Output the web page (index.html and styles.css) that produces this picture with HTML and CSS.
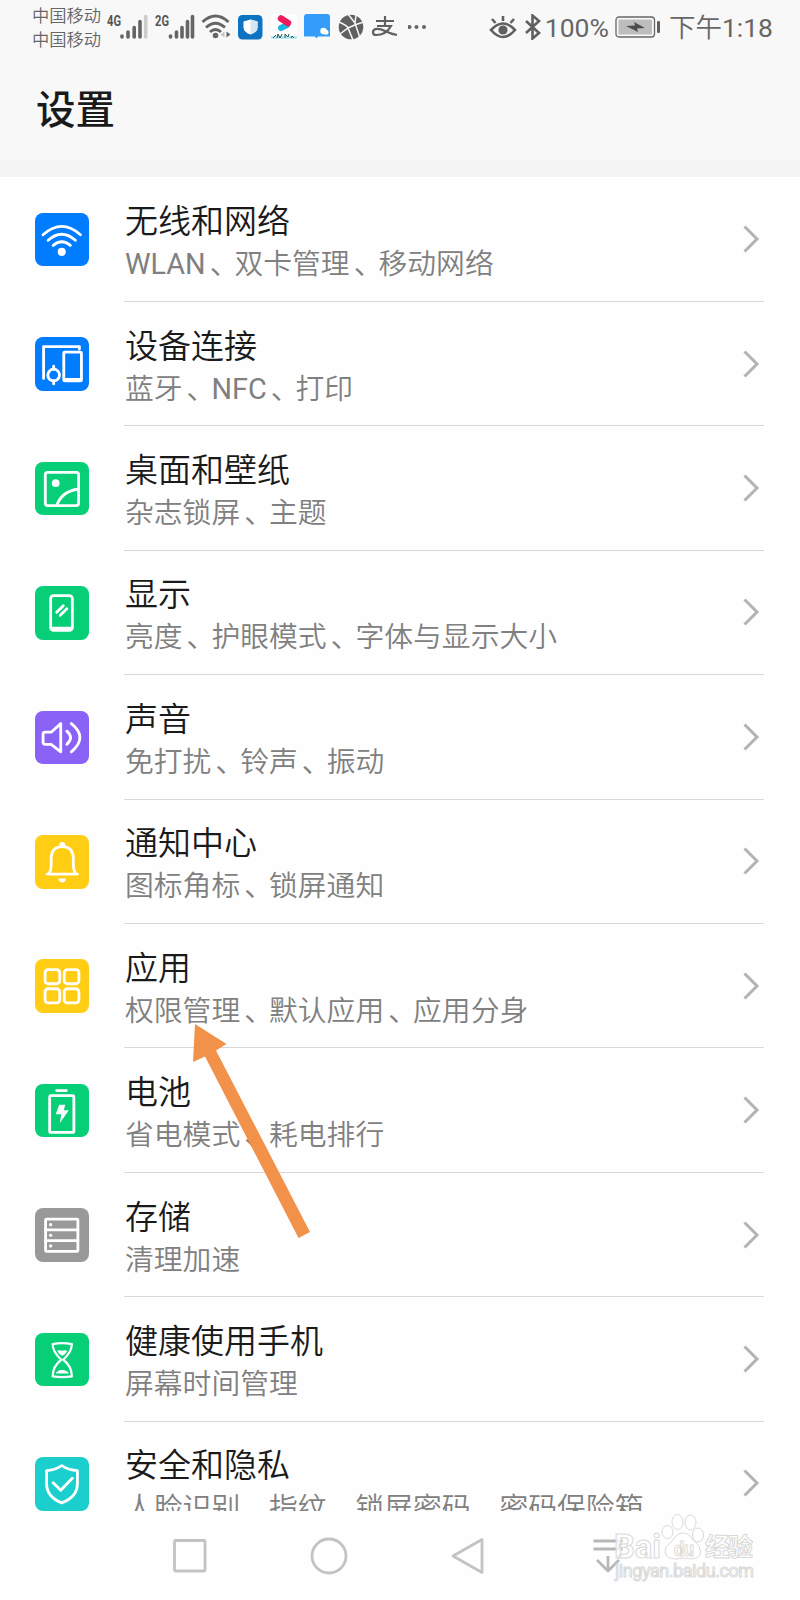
FILE: index.html
```
<!DOCTYPE html>
<html lang="zh-CN">
<head>
  <meta charset="UTF-8">
  <meta name="viewport" content="width=device-width, initial-scale=1.0">
  <title>设置</title>
  <link rel="stylesheet" href="styles.css">
</head>
<body>
  <div class="phone">
    <!-- Status Bar -->
    <div class="status-bar">
      <div class="status-left">
        <div class="carriers">
          <span>中国移动</span>
          <span>中国移动</span>
        </div>
        <svg class="signal" width="42" height="30" viewBox="0 2.5 42 30">
          <text x="1" y="16" textLength="14" lengthAdjust="spacingAndGlyphs">4G</text>
          <path d="M16 26.5v1M22 22.500v5M28.200 18v9.500M34 12v15.500"/>
          <path class="faint" d="M39.700 7v20.500"/>
        </svg>
        <svg class="signal signal-2" width="42" height="30" viewBox="0 2.5 42 30">
          <text x="0" y="16" textLength="14" lengthAdjust="spacingAndGlyphs">2G</text>
          <path d="M15.500 26.500v1M21.500 22.500v5M27 18v9.500M32.500 12v15.500M37.500 7v20.500"/>
        </svg>
        <svg class="wifi-status" width="32" height="28" viewBox="0 0 32 28">
          <path d="M1.500 9Q14.500-3 27.500 9M5 14.500Q14.500 6 24 14.500M9 19Q14.500 14 20 19"/>
          <circle cx="14.500" cy="22.500" r="2.800"/>
          <path class="up" d="M23.500 18.500v6l-4-3z"/>
          <path class="down" d="M25.500 18.500v6l4-3z"/>
        </svg>
        <svg class="app-shield" width="26" height="26" viewBox="0 0 26 26">
          <rect x="0" y="1" width="24.500" height="24.500" rx="4.500" fill="#0e74c2"/>
          <path d="M12.500 5.500l7 2v6q0 4.500-7 7-7-2.500-7-7v-6z" fill="#fff"/>
          <path d="M12.500 5.500l7 2v6q0 4.500-7 7z" fill="#d5e6f2"/>
        </svg>
        <svg class="app-video" width="26" height="26" viewBox="0 0 26 26">
          <rect width="26" height="26" fill="#fff"/>
          <path d="M10 14l6-3" stroke="#19b7e6" stroke-width="6" stroke-linecap="round"/>
          <path d="M10 4.500l7 4.500" fill="none" stroke="#ee1b5d" stroke-width="6.500" stroke-linecap="round"/>
          <path d="M0 22h26v3H0z" fill="#b9eaf0"/>
          <path d="M2 24l3-3M6 24l1-4 2 4 2-4M14 24v-4l3 3 1-3M20 24l1-2 2 2" fill="none" stroke="#24565e" stroke-width="1"/>
        </svg>
        <svg class="app-chat" width="27" height="26" viewBox="0 0 27 26">
          <path d="M3 0h20q3 0 3 3v19.500H14l-1.500 2-1.500-2H0V3q0-3 3-3z" fill="#349dfa"/>
          <circle cx="19.500" cy="17" r="3.200" fill="#fff"/>
          <circle cx="22" cy="18.200" r="2.500" fill="#fff"/>
        </svg>
        <svg class="app-globe" width="26" height="26" viewBox="0 0 26 26">
          <circle cx="13" cy="13" r="12.300" fill="#606060"/>
          <path d="M10 0L17 9 22 24M1 8Q10 12 10 14L15 26M26 8Q18 10 10 14L2 20M17 9L18 1" fill="none" stroke="#f8f8f8" stroke-width="1.500"/>
        </svg>
        <span class="app-zhi">
          <svg width="26" height="22" viewBox="0 0 26 22">
            <path d="M4 5h18M13 0v9M5 10h14Q14 19 4 19q-3 0-3-2.500c0-5 7-4 12-1.500q6 3 12 4" fill="none" stroke="#606060" stroke-width="2.200"/>
          </svg>
        </span>
        <svg class="more" width="20" height="6" viewBox="0 0 20 6">
          <circle cx="1.500" cy="3" r="2"/>
          <circle cx="8.500" cy="3" r="2"/>
          <circle cx="16" cy="3" r="2"/>
        </svg>
      </div>
      <div class="status-right">
        <svg class="eye" width="28" height="26" viewBox="0 0 28 26">
          <path d="M2 16Q14 3 26 16 14 30 2 16zM14 2v5M3 5l3.500 4M25 5l-3.500 4"/>
          <circle cx="14" cy="16" r="4.600"/>
        </svg>
        <svg class="bluetooth" width="18" height="26" viewBox="0 0 18 26">
          <path d="M2 7l13 12-6.500 5.500V1.500L15 7 2 19"/>
        </svg>
        <span class="percent">100%</span>
        <svg class="battery" width="47" height="24" viewBox="0 0 47 24">
          <rect x="1" y="2" width="38.500" height="20" rx="3" fill="none" stroke="#666" stroke-width="1.300"/>
          <rect x="3.500" y="4.500" width="33.500" height="15" fill="#bdbdbd"/>
          <path d="M11 11l9-.500L19 7l11 6-8 .500 1 3.500z" fill="#4c4c4c"/>
          <rect x="42" y="6" width="3" height="12" rx="1.300" fill="#5f5f5f"/>
        </svg>
        <span class="clock">下午<span class="latin">1:18</span></span>
      </div>
    </div>

    <!-- Title -->
    <header class="header">
      <h1>设置</h1>
    </header>

    <!-- Settings List -->
    <main class="settings-list">
      <div class="row">
        <svg class="icon blue" viewBox="0 0 53 53">
          <path d="M8 21.500Q26.500 5 45 21.500M13 27Q26.500 15 40 27M18 32Q26.500 25 35 32"/>
          <circle class="solid" cx="26.500" cy="38.500" r="4"/>
        </svg>
        <div class="row-body">
          <div class="texts"><h2>无线和网络</h2><p><span class="latin">WLAN</span><i>、</i>双卡管理<i>、</i>移动网络</p></div>
          <svg class="chevron" viewBox="0 0 18 30"><path d="M2.500 2.500L15 15 2.500 27.500"/></svg>
        </div>
      </div>
      <div class="row">
        <svg class="icon blue" viewBox="0 0 53 53">
          <path d="M8.500 41V9.500H44V12M18.500 29v3M18.500 43.500v3"/>
          <rect x="28.500" y="15" width="17.500" height="28.500" rx="1"/>
          <path d="M29.500 42h15.500"/>
          <circle cx="18.500" cy="37.700" r="5.800"/>
        </svg>
        <div class="row-body">
          <div class="texts"><h2>设备连接</h2><p>蓝牙<i>、</i><span class="latin">NFC</span><i>、</i>打印</p></div>
          <svg class="chevron" viewBox="0 0 18 30"><path d="M2.500 2.500L15 15 2.500 27.500"/></svg>
        </div>
      </div>
      <div class="row">
        <svg class="icon green" viewBox="0 0 53 53">
          <rect x="10.200" y="10.200" width="33" height="33" rx="2.500"/>
          <path d="M21.500 43Q27 28.500 43 27"/>
          <circle class="solid" cx="20.500" cy="21" r="3.800"/>
        </svg>
        <div class="row-body">
          <div class="texts"><h2>桌面和壁纸</h2><p>杂志锁屏<i>、</i>主题</p></div>
          <svg class="chevron" viewBox="0 0 18 30"><path d="M2.500 2.500L15 15 2.500 27.500"/></svg>
        </div>
      </div>
      <div class="row">
        <svg class="icon green" viewBox="0 0 53 53">
          <rect x="15.500" y="9.500" width="21.500" height="34.500" rx="3"/>
          <path d="M17 41.800h18.500"/>
          <path d="M21.500 26l6.500-6.500M25 29l6.500-6.500"/>
        </svg>
        <div class="row-body">
          <div class="texts"><h2>显示</h2><p>亮度<i>、</i>护眼模式<i>、</i>字体与显示大小</p></div>
          <svg class="chevron" viewBox="0 0 18 30"><path d="M2.500 2.500L15 15 2.500 27.500"/></svg>
        </div>
      </div>
      <div class="row">
        <svg class="icon purple" viewBox="0 0 53 53">
          <path d="M25.500 12.500v28L16 33H10q-2 0-2-2v-8q0-2 2-2h6zM31.500 20q7.500 6.500 0 13M36 12.500q17 13.500 0 28"/>
        </svg>
        <div class="row-body">
          <div class="texts"><h2>声音</h2><p>免打扰<i>、</i>铃声<i>、</i>振动</p></div>
          <svg class="chevron" viewBox="0 0 18 30"><path d="M2.500 2.500L15 15 2.500 27.500"/></svg>
        </div>
      </div>
      <div class="row">
        <svg class="icon yellow" viewBox="0 0 53 53">
          <path d="M12 38.700h30M14 38q2-3 2-8v-6q0-12.500 11-12.500T38 24v6q0 5 2 8"/>
          <circle class="solid" cx="27" cy="10" r="3"/>
          <path class="solid" d="M23 43h8q-1 4-4 4t-4-4z"/>
        </svg>
        <div class="row-body">
          <div class="texts"><h2>通知中心</h2><p>图标角标<i>、</i>锁屏通知</p></div>
          <svg class="chevron" viewBox="0 0 18 30"><path d="M2.500 2.500L15 15 2.500 27.500"/></svg>
        </div>
      </div>
      <div class="row">
        <svg class="icon yellow" viewBox="0 0 53 53">
          <rect x="10" y="10.500" width="14.500" height="14" rx="3"/>
          <rect x="29" y="10.500" width="14.500" height="14" rx="3"/>
          <rect x="10" y="29.500" width="14.500" height="14" rx="3"/>
          <rect x="29" y="29.500" width="14.500" height="14" rx="3"/>
        </svg>
        <div class="row-body">
          <div class="texts"><h2>应用</h2><p>权限管理<i>、</i>默认应用<i>、</i>应用分身</p></div>
          <svg class="chevron" viewBox="0 0 18 30"><path d="M2.500 2.500L15 15 2.500 27.500"/></svg>
        </div>
      </div>
      <div class="row">
        <svg class="icon green" viewBox="0 0 53 53">
          <rect x="14.500" y="11.500" width="24" height="36.500" rx="1.500"/>
          <path d="M21.500 6.500h9.500"/>
          <path class="solid" d="M24 20.500h6l-1.500 5.500h5L24.500 39l1.500-9h-5.500z"/>
        </svg>
        <div class="row-body">
          <div class="texts"><h2>电池</h2><p>省电模式<i>、</i>耗电排行</p></div>
          <svg class="chevron" viewBox="0 0 18 30"><path d="M2.500 2.500L15 15 2.500 27.500"/></svg>
        </div>
      </div>
      <div class="row">
        <svg class="icon gray" viewBox="0 0 53 53">
          <rect x="10.500" y="11" width="32" height="32" rx="1"/>
          <path d="M10.500 21.700h32M10.500 32.300h32"/>
          <circle class="solid" cx="15.500" cy="16.500" r="1.600"/>
          <circle class="solid" cx="15.500" cy="27" r="1.600"/>
          <circle class="solid" cx="15.500" cy="37.600" r="1.600"/>
        </svg>
        <div class="row-body">
          <div class="texts"><h2>存储</h2><p>清理加速</p></div>
          <svg class="chevron" viewBox="0 0 18 30"><path d="M2.500 2.500L15 15 2.500 27.500"/></svg>
        </div>
      </div>
      <div class="row">
        <svg class="icon green" viewBox="0 0 53 53">
          <path class="thin" d="M17.500 11q9.500-2 19 0Q36.500 19 28 26.500 36.500 33 36.500 43q-9.500 1.500-19 0 0-10 8.500-16.500Q17.500 19 17.500 11z"/>
          <path class="solid" d="M22 17.500q2.500-1 5 0 2.500-1 5 0-1 3-5 5-4-2-5-5zM20.500 40q1-2.500 6.500-3.500 5.500 1 6.500 3.500z"/>
        </svg>
        <div class="row-body">
          <div class="texts"><h2>健康使用手机</h2><p>屏幕时间管理</p></div>
          <svg class="chevron" viewBox="0 0 18 30"><path d="M2.500 2.500L15 15 2.500 27.500"/></svg>
        </div>
      </div>
      <div class="row">
        <svg class="icon cyan" viewBox="0 0 53 53">
          <path d="M26.500 8.500q7 4.500 15.500 5v13q0 13-15.500 19Q11.500 39.500 11.500 26.500v-13q8-.500 15-5z"/>
          <path d="M18 25.500l7.500 7.500L37 21"/>
        </svg>
        <div class="row-body">
          <div class="texts"><h2>安全和隐私</h2><p>人脸识别<i>、</i>指纹<i>、</i>锁屏密码<i>、</i>密码保险箱</p></div>
          <svg class="chevron" viewBox="0 0 18 30"><path d="M2.500 2.500L15 15 2.500 27.500"/></svg>
        </div>
      </div>
    </main>

    <!-- Navigation Bar -->
    <nav class="nav-bar">
      <svg viewBox="0 0 40 40"><rect x="4.500" y="4.500" width="30.500" height="30.500" rx="1"/></svg>
      <svg viewBox="0 0 40 40"><circle cx="20" cy="20" r="17"/></svg>
      <svg viewBox="0 0 40 40"><path d="M33 3.500v33L4 20z"/></svg>
      <svg viewBox="0 0 40 40"><path d="M5.500 5h29M5.500 13h29M20 20v15M9 24l11 11 11-11"/></svg>
    </nav>

    <!-- Pointer Arrow -->
    <svg class="pointer" width="120" height="216" viewBox="0 0 120 216">
      <path d="M2 0L33.500 20 23 26.500 117 208 105.500 214 12 32.500 0 38z"/>
    </svg>

    <!-- Watermark -->
    <svg class="watermark" width="150" height="76" viewBox="0 0 150 76">
      <ellipse cx="57.500" cy="22" rx="5.500" ry="6.500"/>
      <ellipse cx="67.500" cy="12" rx="5.500" ry="7.500"/>
      <ellipse cx="80.500" cy="12.500" rx="5.500" ry="7.500"/>
      <ellipse cx="88" cy="25" rx="5.500" ry="7"/>
      <path d="M73 23q6 0 10 7l6 6q5 12-7 13-9-2-17 0-13-1-9-12l7-7q4-7 10-7z"/>
      <text class="brand" x="4" y="48" textLength="47" lengthAdjust="spacingAndGlyphs">Bai</text>
      <text class="du" x="64" y="46" textLength="20" lengthAdjust="spacingAndGlyphs">du</text>
      <text class="cn" x="95" y="46" textLength="48">经验</text>
      <text class="url" x="5" y="67" textLength="139">jingyan.baidu.com</text>
    </svg>
  </div>
</body>
</html>
```
FILE: styles.css
```
body {
  font-family: Roboto, 'Noto Sans CJK SC', sans-serif;
  background: #fefefe;
  color: #1a1a1a;
  margin: 0;
  padding: 0;
}

.phone {
  position: relative;
  display: flex;
  flex-direction: column;
  width: 800px;
  height: 1600px;
  overflow: hidden;
}

svg {
  display: block;
  flex-shrink: 0;
}

.latin {
  font-weight: 400;
}

/* Status bar */
.status-bar {
  display: flex;
  justify-content: space-between;
  box-sizing: border-box;
  height: 54px;
  padding: 0 27px 0 32px;
  background: #f8f8f8;
  color: #666666;
}

.status-left, .status-right {
  display: flex;
  align-items: center;
}

.carriers {
  display: flex;
  flex-direction: column;
  width: 70px;
  margin-right: 4px;
  padding-top: 2px;
  font-size: 17.3px;
  font-weight: 350;
  line-height: 24px;
}

.signal {
  fill: none;
  stroke: #656565;
  stroke-width: 3.6;
  stroke-linecap: round;
  overflow: visible;
}

.signal .faint {
  stroke: #cccccc;
}

.signal text {
  fill: #555555;
  stroke: none;
  font-size: 15px;
  font-weight: bold;
}

.signal-2 {
  margin-left: 7px;
}

.wifi-status {
  margin-left: 4px;
  fill: none;
  stroke: #656565;
  stroke-width: 3;
}

.wifi-status circle, .wifi-status .down {
  fill: #656565;
  stroke: none;
}

.wifi-status .up {
  fill: #c4c4c4;
  stroke: none;
}

.app-shield {
  margin-left: 5px;
}

.app-video, .app-chat, .app-globe {
  margin-left: 7px;
}

.app-zhi {
  margin-left: 8px;
}

.more {
  margin-left: 10px;
  fill: #666666;
}

.eye {
  fill: none;
  stroke: #606060;
  stroke-width: 2.6;
}

.eye circle {
  fill: #606060;
  stroke: none;
}

.bluetooth {
  margin: 0 3px 0 7px;
  fill: none;
  stroke: #606060;
  stroke-width: 2.6;
}

.percent, .clock {
  padding-top: 2px;
  font-size: 26.5px;
  line-height: 54px;
  white-space: nowrap;
}

.clock {
  font-weight: 350;
}

.battery {
  margin: 0 7px 0 6px;
}

/* Header */
.header {
  box-sizing: border-box;
  height: 123px;
  padding: 28px 36px 0;
  background: #f8f8f8;
  border-bottom: 17px solid #f3f3f3;
}

h1 {
  margin: 0;
  font-size: 39.500px;
  font-weight: 500;
  line-height: 58px;
}

/* Settings list */
.settings-list {
  box-sizing: border-box;
  height: 1334px;
  padding-top: 0.5px;
  overflow: hidden;
}

.row {
  display: flex;
  align-items: center;
  height: 124.430px;
  padding: 0 36px 0 35px;
}

.icon {
  width: 53.500px;
  height: 53.500px;
  margin-right: 35.500px;
  border-radius: 8px;
  fill: none;
  stroke: #ffffff;
  stroke-width: 2.8;
  stroke-linecap: round;
  stroke-linejoin: round;
}

.icon .solid {
  fill: #ffffff;
  stroke: none;
}

.icon .thin {
  stroke-width: 2.2;
}

.blue {
  background: #007dff;
}

.green {
  background: #06cf78;
}

.purple {
  background: #8a62f5;
}

.yellow {
  background: #ffcd14;
}

.gray {
  background: #999999;
}

.cyan {
  background: #1ccfcf;
}

.row-body {
  display: flex;
  flex: 1;
  align-items: center;
  justify-content: space-between;
  box-sizing: border-box;
  height: 100%;
  padding-right: 4px;
  border-bottom: 1px solid #d8d8d8;
}

.texts {
  padding: 6px 0 0 1px;
  white-space: nowrap;
}

h2 {
  margin: 0;
  font-size: 33px;
  font-weight: 350;
  line-height: 44px;
}

.texts p {
  margin: 0;
  color: #808080;
  font-size: 28.8px;
  font-weight: 350;
  line-height: 40px;
}

/* Enumeration comma sits a little to the right in its cell */
.texts i {
  margin: 0 -4px 0 4px;
  font-style: normal;
}

.chevron {
  width: 18px;
  height: 30px;
  fill: none;
  stroke: #b3b3b3;
  stroke-width: 3;
}

/* Navigation bar */
.nav-bar {
  display: flex;
  flex: 1;
  align-items: center;
  gap: 99.500px;
  padding-left: 169.500px;
}

.nav-bar svg {
  width: 40px;
  height: 40px;
  fill: none;
  stroke: #c3c3c3;
  stroke-width: 2.8;
  stroke-linejoin: round;
}

.nav-bar svg:last-child {
  stroke: #b8b8b8;
}

/* Overlays */
.pointer {
  position: absolute;
  left: 193px;
  top: 1024px;
  fill: #f29149;
}

.watermark {
  position: absolute;
  left: 610px;
  top: 1510px;
  fill: rgba(255, 255, 255, 0.8);
  stroke: #d9d9d9;
  stroke-width: 1;
}

.brand {
  font-size: 33px;
  font-weight: bold;
}

.du {
  font-size: 20px;
  font-weight: bold;
}

.cn {
  font-size: 25px;
  font-weight: bold;
}

.url {
  font-size: 18px;
}
```
